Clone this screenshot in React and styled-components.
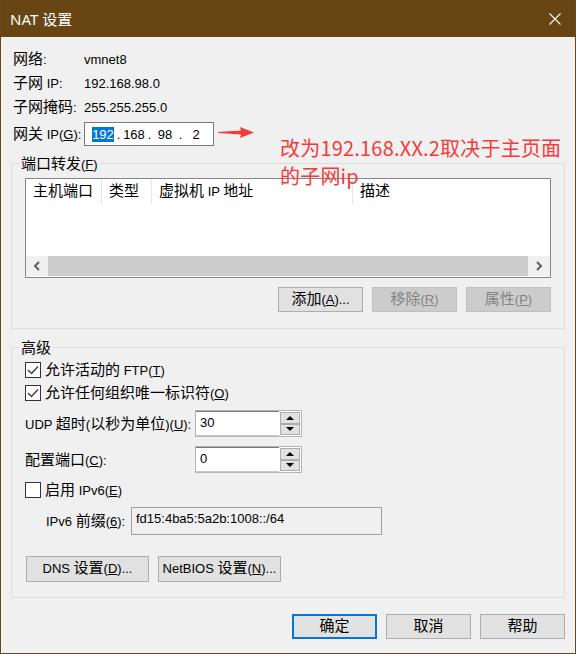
import styled, { createGlobalStyle } from "styled-components";

const GlobalStyle = createGlobalStyle`
  * { box-sizing: border-box; }
  html, body {
    margin: 0;
    padding: 0;
    background: #f0f0f0;
  }
  body {
    font-family: "Liberation Sans", "Noto Sans CJK SC", sans-serif;
    font-size: 13px;
    color: #000;
  }
`;

// dialog CJK glyphs render a little larger than the latin ones
const Cjk = styled.span`
  font-family: "Noto Sans CJK SC", sans-serif;
  font-size: 15px;
  line-height: 1;
`;

const mix = (str) =>
  str.split(/([\u3000-\u9fff]+)/).map((part, i) =>
    /[\u3000-\u9fff]/.test(part) ? <Cjk key={i}>{part}</Cjk> : part
  );

const Window = styled.div`
  position: relative;
  width: 576px;
  height: 654px;
  border: 1px solid #6a4716;
  border-top: none;
  background: #f0f0f0;
  display: flex;
  flex-direction: column;
`;

const TitleBar = styled.div`
  height: 37px;
  flex-shrink: 0;
  background: #684614;
  color: #fff;
  display: flex;
  align-items: center;
  justify-content: space-between;
  padding: 0 14px 0 9px;
  font-family: "Noto Sans", "Noto Sans CJK SC", sans-serif;
  font-size: 15px;
`;

const Body = styled.div`
  padding: 0 10px;
  display: flex;
  flex-direction: column;
`;

const InfoList = styled.div`
  padding-top: 10px;
`;

const InfoRow = styled.div`
  display: grid;
  grid-template-columns: 71px auto;
  align-items: center;
  height: 24px;
  padding-left: 2px;
`;

const GatewayRow = styled.div`
  display: flex;
  align-items: center;
  height: 24px;
  margin-top: 3px;
  padding-left: 2px;
`;

const Label = styled.span`
  width: ${(p) => p.w || "auto"};
  flex-shrink: 0;
  white-space: nowrap;
  line-height: 16px;
`;

const IpField = styled.div`
  width: 130px;
  height: 24px;
  border: 1px solid #7a7a7a;
  background: #fff;
  display: flex;
  align-items: center;
  padding-left: 5px;
`;

const IpSeg = styled.span`
  width: 26px;
  text-align: center;
  line-height: 15px;
`;

const IpDot = styled.span`
  width: 5px;
  text-align: center;
  line-height: 15px;
`;

const Selected = styled.span`
  background: #0078d7;
  color: #fff;
  display: inline-block;
  line-height: 15px;
`;

const Arrow = styled.svg`
  margin: 0 0 4px 4px;
`;

const Note = styled.div`
  position: absolute;
  left: 279px;
  top: 134px;
  font-family: "Noto Sans CJK SC", sans-serif;
  font-size: 20px;
  letter-spacing: 0.2px;
  line-height: 28px;
  color: #f53a3a;
  white-space: nowrap;
`;

const Group = styled.div`
  position: relative;
  margin-top: ${(p) => p.top}px;
  border: 1px solid #dcdcdc;
  padding: 14px 13px ${(p) => p.bottom}px;
`;

const GroupTitle = styled.span`
  position: absolute;
  top: -9px;
  left: 7px;
  padding: 0 2px;
  line-height: 16px;
  background: #f0f0f0;
`;

const ListView = styled.div`
  height: 100px;
  border: 1px solid #828790;
  background: #fff;
  display: flex;
  flex-direction: column;
`;

const ListHeader = styled.div`
  display: flex;
  height: 25px;
`;

const HeaderCol = styled.div`
  width: ${(p) => (p.w ? `${p.w}px` : "auto")};
  flex: ${(p) => (p.w ? "none" : "1")};
  padding-left: 7px;
  line-height: 25px;
  border-right: ${(p) => (p.w ? "1px solid #e5e5e5" : "none")};
  white-space: nowrap;
`;

const ListSpacer = styled.div`
  flex: 1;
`;

const ScrollBar = styled.div`
  display: flex;
  height: 20px;
  margin-bottom: 1px;
  background: #f0f0f0;
`;

const ScrollArrow = styled.div`
  width: 22px;
  display: flex;
  align-items: center;
  justify-content: center;
`;

const ScrollThumb = styled.div`
  flex: 1;
  background: #cdcdcd;
`;

const ButtonRow = styled.div`
  display: flex;
  justify-content: ${(p) => (p.start ? "flex-start" : "flex-end")};
  gap: 9px;
  margin-top: ${(p) => p.top}px;
  padding-left: ${(p) => (p.start ? "1px" : "0")};
`;

const Button = styled.div`
  width: ${(p) => p.w || 85}px;
  height: ${(p) => p.h || 25}px;
  text-align: center;
  white-space: nowrap;
  line-height: ${(p) => (p.h || 25) - (p.primary ? 4 : 2)}px;
  background: ${(p) => (p.disabled ? "#cccccc" : "#e1e1e1")};
  border: ${(p) => (p.primary ? "2px solid #0078d7" : p.disabled ? "1px solid #bfbfbf" : "1px solid #adadad")};
  color: ${(p) => (p.disabled ? "#838383" : "#000")};
`;

const CheckRow = styled.div`
  display: flex;
  align-items: center;
  gap: 4px;
  height: 16px;
  margin-top: ${(p) => p.top || 0}px;
  line-height: 16px;
`;

const Box = styled.span`
  width: 16px;
  height: 16px;
  flex-shrink: 0;
  border: 1px solid #333;
  background: #fff;
  display: flex;
  align-items: center;
  justify-content: center;
`;

const FieldRow = styled.div`
  display: flex;
  align-items: center;
  margin-top: ${(p) => p.top}px;
  padding-left: ${(p) => p.indent || 0}px;
`;

const SpinBox = styled.div`
  width: 107px;
  height: 27px;
  display: flex;
  border: 1px solid #b4b4b4;
  background: #fff;
`;

const SpinText = styled.div`
  flex: 1;
  padding: 3px 4px;
  line-height: 16px;
  border-top: 1px solid #7a7a7a;
  border-bottom: 1px solid #c8c8c8;
`;

const SpinButtons = styled.div`
  width: 20px;
  margin: 1px;
  display: flex;
  flex-direction: column;
`;

const SpinBtn = styled.div`
  flex: 1;
  background: #e1e1e1;
  border: 1px solid #adadad;
  display: flex;
  align-items: center;
  justify-content: center;
`;

const Tri = styled.span`
  width: 0;
  height: 0;
  border-left: 4px solid transparent;
  border-right: 4px solid transparent;
  ${(p) => (p.down ? "border-top: 4px solid #000;" : "border-bottom: 4px solid #000;")}
`;

const TextBox = styled.div`
  width: 251px;
  height: 28px;
  border: 1px solid #a0a0a0;
  background: #f0f0f0;
  padding: 3px 4px;
  line-height: 16px;
`;

const Check = () => (
  <svg width="12" height="10" viewBox="0 0 12 10">
    <polyline points="1,5 4.5,8.5 11,1.5" fill="none" stroke="#444" strokeWidth="1.5" />
  </svg>
);

const Chevron = ({ right }) => (
  <svg width="8" height="10" viewBox="0 0 8 10">
    <polyline
      points={right ? "2,1 6,5 2,9" : "6,1 2,5 6,9"}
      fill="none"
      stroke="#606060"
      strokeWidth="2"
    />
  </svg>
);

const Spin = ({ value }) => (
  <SpinBox>
    <SpinText>{value}</SpinText>
    <SpinButtons>
      <SpinBtn>
        <Tri />
      </SpinBtn>
      <SpinBtn>
        <Tri down />
      </SpinBtn>
    </SpinButtons>
  </SpinBox>
);

const App = () => {
  return (
    <>
      <GlobalStyle />
      <Window>
        <TitleBar>
          <span>NAT 设置</span>
          <svg width="12" height="12" viewBox="0 0 12 12">
            <path d="M0.5 0.5 L11.5 11.5 M11.5 0.5 L0.5 11.5" stroke="#fff" strokeWidth="1.1" />
          </svg>
        </TitleBar>
        <Body>
          <InfoList>
            <InfoRow>
              <Label>{mix("网络:")}</Label>
              <span>vmnet8</span>
            </InfoRow>
            <InfoRow>
              <Label>{mix("子网 IP:")}</Label>
              <span>192.168.98.0</span>
            </InfoRow>
            <InfoRow>
              <Label>{mix("子网掩码:")}</Label>
              <span>255.255.255.0</span>
            </InfoRow>
          </InfoList>
          <GatewayRow>
            <Label w="71px">
              {mix("网关 IP(")}
              <u>G</u>):
            </Label>
            <IpField>
              <IpSeg>
                <Selected>192</Selected>
              </IpSeg>
              <IpDot>.</IpDot>
              <IpSeg>168</IpSeg>
              <IpDot>.</IpDot>
              <IpSeg>98</IpSeg>
              <IpDot>.</IpDot>
              <IpSeg>2</IpSeg>
            </IpField>
            <Arrow width="36" height="11" viewBox="0 0 36 11">
              <path d="M0 5 L23 3.6 L22 0 L36 5.5 L22 11 L23 7.4 L0 6 Z" fill="#ef3b3b" />
            </Arrow>
          </GatewayRow>

          <Group top={17} bottom={16}>
            <GroupTitle>
              {mix("端口转发(")}
              <u>F</u>)
            </GroupTitle>
            <ListView>
              <ListHeader>
                <HeaderCol w={76}>{mix("主机端口")}</HeaderCol>
                <HeaderCol w={50}>{mix("类型")}</HeaderCol>
                <HeaderCol w={201}>{mix("虚拟机 IP 地址")}</HeaderCol>
                <HeaderCol>{mix("描述")}</HeaderCol>
              </ListHeader>
              <ListSpacer />
              <ScrollBar>
                <ScrollArrow>
                  <Chevron />
                </ScrollArrow>
                <ScrollThumb />
                <ScrollArrow>
                  <Chevron right />
                </ScrollArrow>
              </ScrollBar>
            </ListView>
            <ButtonRow top={9}>
              <Button>
                {mix("添加(")}
                <u>A</u>)...
              </Button>
              <Button disabled>
                {mix("移除(")}
                <u>R</u>)
              </Button>
              <Button disabled>
                {mix("属性(")}
                <u>P</u>)
              </Button>
            </ButtonRow>
          </Group>

          <Group top={18} bottom={15}>
            <GroupTitle>{mix("高级")}</GroupTitle>
            <CheckRow>
              <Box>
                <Check />
              </Box>
              <span>
                {mix("允许活动的 FTP(")}
                <u>T</u>)
              </span>
            </CheckRow>
            <CheckRow top={7}>
              <Box>
                <Check />
              </Box>
              <span>
                {mix("允许任何组织唯一标识符(")}
                <u>O</u>)
              </span>
            </CheckRow>
            <FieldRow top={9}>
              <Label w="170px">
                {mix("UDP 超时(以秒为单位)(")}
                <u>U</u>):
              </Label>
              <Spin value="30" />
            </FieldRow>
            <FieldRow top={9}>
              <Label w="170px">
                {mix("配置端口(")}
                <u>C</u>):
              </Label>
              <Spin value="0" />
            </FieldRow>
            <CheckRow top={9}>
              <Box />
              <span>
                {mix("启用 IPv6(")}
                <u>E</u>)
              </span>
            </CheckRow>
            <FieldRow top={9} indent={21}>
              <Label w="85px">
                {mix("IPv6 前缀(")}
                <u>6</u>):
              </Label>
              <TextBox>fd15:4ba5:5a2b:1008::/64</TextBox>
            </FieldRow>
            <ButtonRow start top={21}>
              <Button w={123} h={26}>
                {mix("DNS 设置(")}
                <u>D</u>)...
              </Button>
              <Button w={123} h={26}>
                {mix("NetBIOS 设置(")}
                <u>N</u>)...
              </Button>
            </ButtonRow>
          </Group>

          <ButtonRow top={16}>
            <Button primary>{mix("确定")}</Button>
            <Button>{mix("取消")}</Button>
            <Button>{mix("帮助")}</Button>
          </ButtonRow>
        </Body>
        <Note>
          改为192.168.XX.2取决于主页面
          <br />
          的子网ip
        </Note>
      </Window>
    </>
  );
};

export default App;
